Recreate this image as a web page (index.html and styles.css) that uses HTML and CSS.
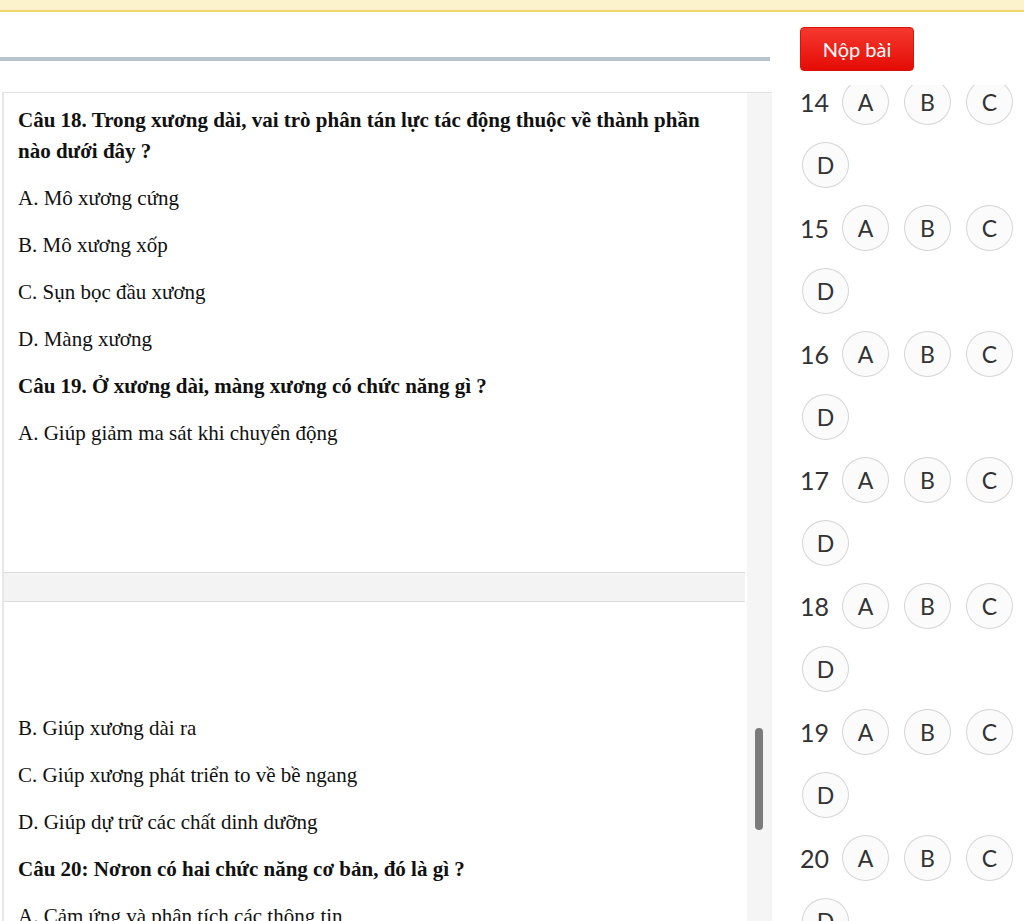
FILE: index.html
```html
<!DOCTYPE html>
<html lang="vi">
<head>
    <meta charset="UTF-8">
    <meta name="viewport" content="width=device-width, initial-scale=1.0">
    <title>Bài thi</title>
    <link rel="stylesheet" href="styles.css">
</head>
<body>
    <div class="thanh-tren"></div>
    <div class="khung">
        <div class="cot-trai">
            <div class="tien-do"></div>
            <div class="vung-cau-hoi">
                <div class="danh-sach">
                    <div class="the the-1">
                        <p class="hoi">Câu 18. Trong xương dài, vai trò phân tán lực tác động thuộc về thành phần nào dưới đây ?</p>
                        <p>A. Mô xương cứng</p>
                        <p>B. Mô xương xốp</p>
                        <p>C. Sụn bọc đầu xương</p>
                        <p>D. Màng xương</p>
                        <p class="hoi">Câu 19. Ở xương dài, màng xương có chức năng gì ?</p>
                        <p>A. Giúp giảm ma sát khi chuyển động</p>
                    </div>
                    <div class="ngan"></div>
                    <div class="the the-2">
                        <p>B. Giúp xương dài ra</p>
                        <p>C. Giúp xương phát triển to về bề ngang</p>
                        <p>D. Giúp dự trữ các chất dinh dưỡng</p>
                        <p class="hoi">Câu 20: Nơron có hai chức năng cơ bản, đó là gì ?</p>
                        <p>A. Cảm ứng và phân tích các thông tin</p>
                    </div>
                </div>
                <div class="thanh-cuon">
                    <div class="nut-cuon"></div>
                </div>
            </div>
        </div>
        <div class="cot-phai">
            <button class="nop-bai">Nộp bài</button>
            <div class="phieu">
                <div class="phieu-noi">
                    <div class="cau"><span class="so">14</span><span class="o">A</span><span class="o">B</span><span class="o">C</span><span class="o">D</span></div>
                    <div class="cau"><span class="so">15</span><span class="o">A</span><span class="o">B</span><span class="o">C</span><span class="o">D</span></div>
                    <div class="cau"><span class="so">16</span><span class="o">A</span><span class="o">B</span><span class="o">C</span><span class="o">D</span></div>
                    <div class="cau"><span class="so">17</span><span class="o">A</span><span class="o">B</span><span class="o">C</span><span class="o">D</span></div>
                    <div class="cau"><span class="so">18</span><span class="o">A</span><span class="o">B</span><span class="o">C</span><span class="o">D</span></div>
                    <div class="cau"><span class="so">19</span><span class="o">A</span><span class="o">B</span><span class="o">C</span><span class="o">D</span></div>
                    <div class="cau"><span class="so">20</span><span class="o">A</span><span class="o">B</span><span class="o">C</span><span class="o">D</span></div>
                </div>
            </div>
        </div>
    </div>
</body>
</html>
```

FILE: styles.css
```css
body {
    margin: 0;
    height: 921px;
    overflow: hidden;
    background: #fff;
    font-family: "Liberation Serif", "Times New Roman", serif;
}
.thanh-tren {
    height: 10px;
    background: #fcf3cd;
    border-bottom: 2px solid #efd66c;
}
.khung {
    display: flex;
}
.cot-trai {
    width: 772px;
    flex: none;
}
.tien-do {
    height: 4px;
    margin-top: 45px;
    background: #b9c5cd;
    width: 770px;
}
.vung-cau-hoi {
    margin-top: 31px;
    margin-left: 2px;
    border-top: 1px solid #e2e2e2;
    border-left: 2px solid #e6e6e6;
    display: flex;
    height: 900px;
}
.danh-sach {
    width: 741px;
    flex: none;
}
.the {
    background: #fff;
    padding: 12px 0 0 14px;
    color: #111;
    font-size: 21px;
}
.the p {
    margin: 0 0 16px;
    line-height: 31px;
    width: 715px;
}
.the .hoi {
    font-weight: bold;
}
.the-1 {
    height: 467px;
    border-bottom: 1px solid #dcdcdc;
}
.the-2 {
    border-top: 1px solid #dcdcdc;
    padding-top: 111px;
}
.ngan {
    height: 28px;
    background: #f3f3f3;
}
.thanh-cuon {
    width: 25px;
    background: #f5f5f5;
    margin-left: 2px;
}
.nut-cuon {
    width: 8px;
    height: 102px;
    margin: 635px 0 0 8px;
    border-radius: 4px;
    background: #7b7b7b;
}
.cot-phai {
    flex: 1;
    padding-left: 28px;
    font-family: Lato, "Open Sans", sans-serif;
}
.nop-bai {
    display: block;
    margin-top: 15px;
    width: 114px;
    height: 44px;
    border: 1px solid #d8120c;
    border-radius: 4px;
    background: linear-gradient(#f5392f, #e40c05);
    color: #fff;
    font-family: Lato, sans-serif;
    font-size: 20px;
    padding: 0;
}
.phieu {
    margin-top: 14px;
    height: 836px;
    overflow: hidden;
}
.phieu-noi {
    margin-top: -6px;
    width: 222px;
}
.cau {
    display: flex;
    flex-wrap: wrap;
    align-items: center;
    column-gap: 15px;
    row-gap: 17px;
    margin-bottom: 17px;
}
.so {
    width: 27px;
    font-size: 25px;
    color: #333;
    text-align: left;
    line-height: 46px;
}
.o {
    width: 47px;
    height: 46px;
    box-sizing: border-box;
    border: 1px solid #d5d5d5;
    border-radius: 50%;
    background: #fbfbfb;
    display: flex;
    align-items: center;
    justify-content: center;
    font-size: 23px;
    color: #333;
}
.cau .o:last-child {
    margin-left: 2px;
}
```
